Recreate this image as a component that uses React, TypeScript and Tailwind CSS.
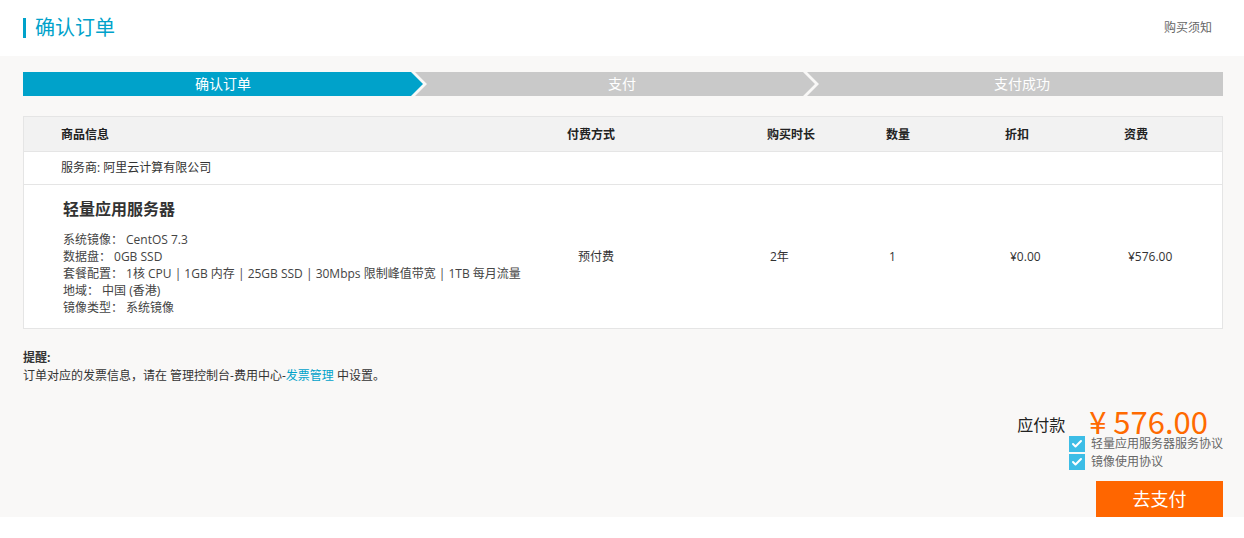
import { Check } from 'lucide-react';

const steps = ['确认订单', '支付', '支付成功'];

const specs: [string, string][] = [
  ['系统镜像：', 'CentOS 7.3'],
  ['数据盘：', '0GB SSD'],
  ['套餐配置：', '1核 CPU | 1GB 内存 | 25GB SSD | 30Mbps 限制峰值带宽 | 1TB 每月流量'],
  ['地域：', '中国 (香港)'],
  ['镜像类型：', '系统镜像'],
];

const cols = 'grid grid-cols-[543px_200px_119px_119px_119px_1fr]';

function Agree({ label }: { label: string }) {
  return (
    <label className="flex h-[18px] items-center gap-[6px] text-xs text-[#666]">
      <span className="flex h-4 w-4 items-center justify-center bg-[#3dbde6]">
        <Check className="h-3 w-3 text-white" strokeWidth={4} />
      </span>
      {label}
    </label>
  );
}

export default function App() {
  return (
    <div className="min-h-[538px] w-[1244px] bg-white text-[#333] font-['Open_Sans','Noto_Sans_CJK_SC',sans-serif]">
      <header className="flex h-14 items-center justify-between pl-[23px] pr-[32px]">
        <div className="flex items-center gap-[9px]">
          <span className="h-5 w-[3px] bg-[#00a2ca]" />
          <h1 className="text-[20px] leading-7 text-[#00a2ca]">确认订单</h1>
        </div>
        <a className="text-xs text-[#666]">购买须知</a>
      </header>

      <main className="bg-[#f9f8f7] pl-[23px] pr-[21px] pt-4">
        {/* steps */}
        <div className="flex h-6 leading-6">
          {steps.map((s, i) => (
            <div
              key={s}
              className={
                i === 0
                  ? 'flex w-[400px] items-center justify-center bg-[#00a2ca] text-sm text-white [clip-path:polygon(0_0,calc(100%-12px)_0,100%_50%,calc(100%-12px)_100%,0_100%)]'
                  : i === 1
                    ? '-ml-[8px] flex w-[400px] items-center justify-center bg-[#c9c9c9] pl-[14px] text-sm text-white [clip-path:polygon(0_0,calc(100%-12px)_0,100%_50%,calc(100%-12px)_100%,0_100%,12px_50%)]'
                    : '-ml-[8px] flex flex-1 items-center justify-center bg-[#c9c9c9] pl-[14px] text-sm text-white [clip-path:polygon(0_0,100%_0,100%_100%,0_100%,12px_50%)]'
              }
            >
              {s}
            </div>
          ))}
        </div>

        {/* table */}
        <div className="mt-5 border border-[#e5e5e5] bg-white text-xs">
          <div className={`${cols} h-[35px] items-center border-b border-[#e5e5e5] bg-[#f2f2f2] pt-[2px] font-bold text-[#222]`}>
            <div className="pl-[37px]">商品信息</div>
            <div>付费方式</div>
            <div>购买时长</div>
            <div>数量</div>
            <div>折扣</div>
            <div>资费</div>
          </div>
          <div className="flex h-[33px] items-center border-b border-[#e5e5e5] pl-[37px]">服务商: 阿里云计算有限公司</div>
          <div className={`${cols} h-[143px] items-center`}>
            <div className="pl-[39px]">
              <h2 className="text-base font-bold leading-6 text-[#333]">轻量应用服务器</h2>
              <div className="mt-[10px] leading-[17px] text-[#444]">
                {specs.map(([k, v]) => (
                  <div key={k}>
                    {k}
                    <span className="pl-[3px]">{v}</span>
                  </div>
                ))}
              </div>
            </div>
            <div className="pl-[11px]">预付费</div>
            <div className="pl-[3px]">2年</div>
            <div className="pl-[3px]">1</div>
            <div className="pl-[5px]">¥0.00</div>
            <div className="pl-[4px]">¥576.00</div>
          </div>
        </div>

        {/* reminder */}
        <div className="mt-5 text-xs leading-[18px]">
          <p className="font-bold">提醒:</p>
          <p>
            订单对应的发票信息，请在 管理控制台-费用中心-<a className="text-[#00a2ca]">发票管理</a> 中设置。
          </p>
        </div>

        {/* total */}
        <div className="mt-[21px] flex flex-col items-end">
          <div className="mr-[15px] flex items-end gap-6">
            <span className="text-base leading-5 text-[#222]">应付款</span>
            <span className="font-['Noto_Sans_CJK_SC',sans-serif] text-[31px] leading-[29px] text-[#ff6a00]">¥ 576.00</span>
          </div>
          <div className="flex flex-col">
            <Agree label="轻量应用服务器服务协议" />
            <Agree label="镜像使用协议" />
          </div>
          <button className="mt-[10px] h-9 w-[127px] bg-[#ff6600] text-lg text-white">去支付</button>
        </div>
      </main>
    </div>
  );
}
